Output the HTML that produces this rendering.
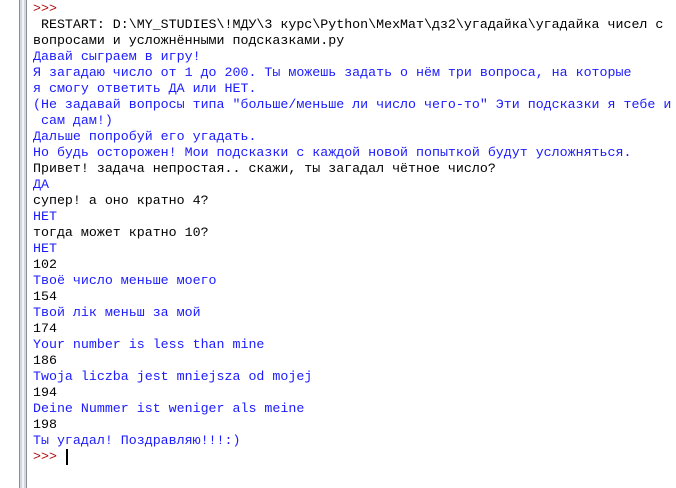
<!DOCTYPE html>
<html><head><meta charset="utf-8"><style>
html,body{margin:0;padding:0;background:#fff;width:676px;height:488px;overflow:hidden}
.bar{position:absolute;left:19px;top:0;width:8px;height:488px;background:#d4d8de;border-left:1px solid #8a9099;border-right:1px solid #8a9099;box-sizing:border-box}
.bar:after{content:"";position:absolute;left:2px;top:0;width:2px;height:100%;background:#f2f4f7}
pre{position:absolute;left:33px;top:1px;margin:0;font-family:"Liberation Mono","Noto Sans CJK SC",monospace;font-size:13.3px;line-height:16px;color:#000;white-space:pre}
.b{color:#1a1aff}.r{color:#b01010}
.cur{display:inline-block;width:2px;height:16px;background:#000;vertical-align:top;margin-left:1px}
</style></head><body>
<div class="bar"></div>
<pre><span class="r">&gt;&gt;&gt;</span>
 RESTART: D:\MY_STUDIES\!МДУ\3 курс\Python\МехМат\дз2\угадайка\угадайка чисел с
вопросами и усложнёнными подсказками.py
<span class="b">Давай сыграем в игру!
Я загадаю число от 1 до 200. Ты можешь задать о нём три вопроса, на которые
я смогу ответить ДА или НЕТ.
(Не задавай вопросы типа "больше/меньше ли число чего-то" Эти подсказки я тебе и
 сам дам!)
Дальше попробуй его угадать.
Но будь осторожен! Мои подсказки с каждой новой попыткой будут усложняться.</span>
Привет! задача непростая.. скажи, ты загадал чётное число?
<span class="b">ДА</span>
супер! а оно кратно 4?
<span class="b">НЕТ</span>
тогда может кратно 10?
<span class="b">НЕТ</span>
102
<span class="b">Твоё число меньше моего</span>
154
<span class="b">Твой лік меньш за мой</span>
174
<span class="b">Your number is less than mine</span>
186
<span class="b">Twoja liczba jest mniejsza od mojej</span>
194
<span class="b">Deine Nummer ist weniger als meine</span>
198
<span class="b">Ты угадал! Поздравляю!!!:)</span>
<span class="r">&gt;&gt;&gt;</span> <span class="cur"></span></pre>
</body></html>
